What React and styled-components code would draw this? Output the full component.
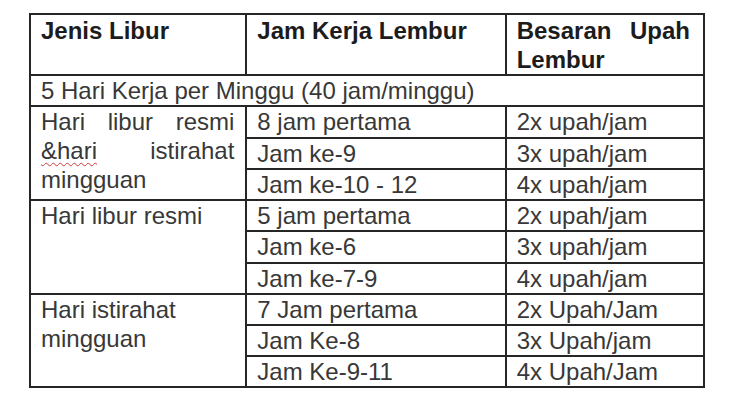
import React from 'react'
import styled, { createGlobalStyle } from 'styled-components'

const GlobalStyle = createGlobalStyle`
    body {
        margin: 0;
        background: #ffffff;
    }
`

const Page = styled.div`
    width: 730px;
    height: 420px;
    padding: 13px 0 0 29px;
    box-sizing: border-box;
    background: #ffffff;
    font-family: 'Liberation Sans', Arial, sans-serif;
`

const Table = styled.table`
    border-collapse: collapse;
    table-layout: fixed;
    width: 676px;
    color: #383838;
    font-size: 24px;
`

const Row = styled.tr`
    height: ${({ $h }) => $h}px;
`

const Cell = styled.td`
    border: 2px solid #262626;
    padding: 0 ${({ $pr }) => $pr ?? 11}px 0 10px;
    vertical-align: top;
    line-height: 29px;
    text-align: ${({ $justify }) => ($justify ? 'justify' : 'left')};
`

const HeadCell = styled(Cell).attrs({ as: 'th' })`
    padding-top: 1px;
    font-weight: 700;
    color: #1c1c1c;
`

const Typo = styled.span`
    text-decoration: underline wavy #d23a3a;
    text-decoration-thickness: 1px;
    text-underline-offset: 3px;
`

const groups = [
    {
        label: (
            <>
                Hari libur resmi <Typo>&amp;hari</Typo> istirahat mingguan
            </>
        ),
        justify: true,
        rows: [
            ['8 jam pertama', '2x upah/jam', 32],
            ['Jam ke-9', '3x upah/jam', 31],
            ['Jam ke-10 - 12', '4x upah/jam', 31],
        ],
    },
    {
        label: 'Hari libur resmi',
        rows: [
            ['5 jam pertama', '2x upah/jam', 31],
            ['Jam ke-6', '3x upah/jam', 32],
            ['Jam ke-7-9', '4x upah/jam', 31],
        ],
    },
    {
        label: 'Hari istirahat mingguan',
        rows: [
            ['7 Jam pertama', '2x Upah/Jam', 31],
            ['Jam Ke-8', '3x Upah/jam', 31],
            ['Jam Ke-9-11', '4x Upah/Jam', 31],
        ],
    },
]

export default function App() {
    return (
        <Page>
            <GlobalStyle />
            <Table>
                <colgroup>
                    <col style={{ width: 216 }} />
                    <col style={{ width: 259 }} />
                    <col style={{ width: 198 }} />
                </colgroup>
                <thead>
                    <Row $h={60}>
                        <HeadCell>Jenis Libur</HeadCell>
                        <HeadCell>Jam Kerja Lembur</HeadCell>
                        <HeadCell $justify $pr={13}>
                            Besaran Upah Lembur
                        </HeadCell>
                    </Row>
                </thead>
                <tbody>
                    <Row $h={31}>
                        <Cell colSpan={3}>5 Hari Kerja per Minggu (40 jam/minggu)</Cell>
                    </Row>
                    {groups.map((g, gi) =>
                        g.rows.map(([jam, upah, h], ri) => (
                            <Row key={`${gi}-${ri}`} $h={h}>
                                {ri === 0 && (
                                    <Cell rowSpan={3} $justify={g.justify}>
                                        {g.label}
                                    </Cell>
                                )}
                                <Cell>{jam}</Cell>
                                <Cell>{upah}</Cell>
                            </Row>
                        ))
                    )}
                </tbody>
            </Table>
        </Page>
    )
}
